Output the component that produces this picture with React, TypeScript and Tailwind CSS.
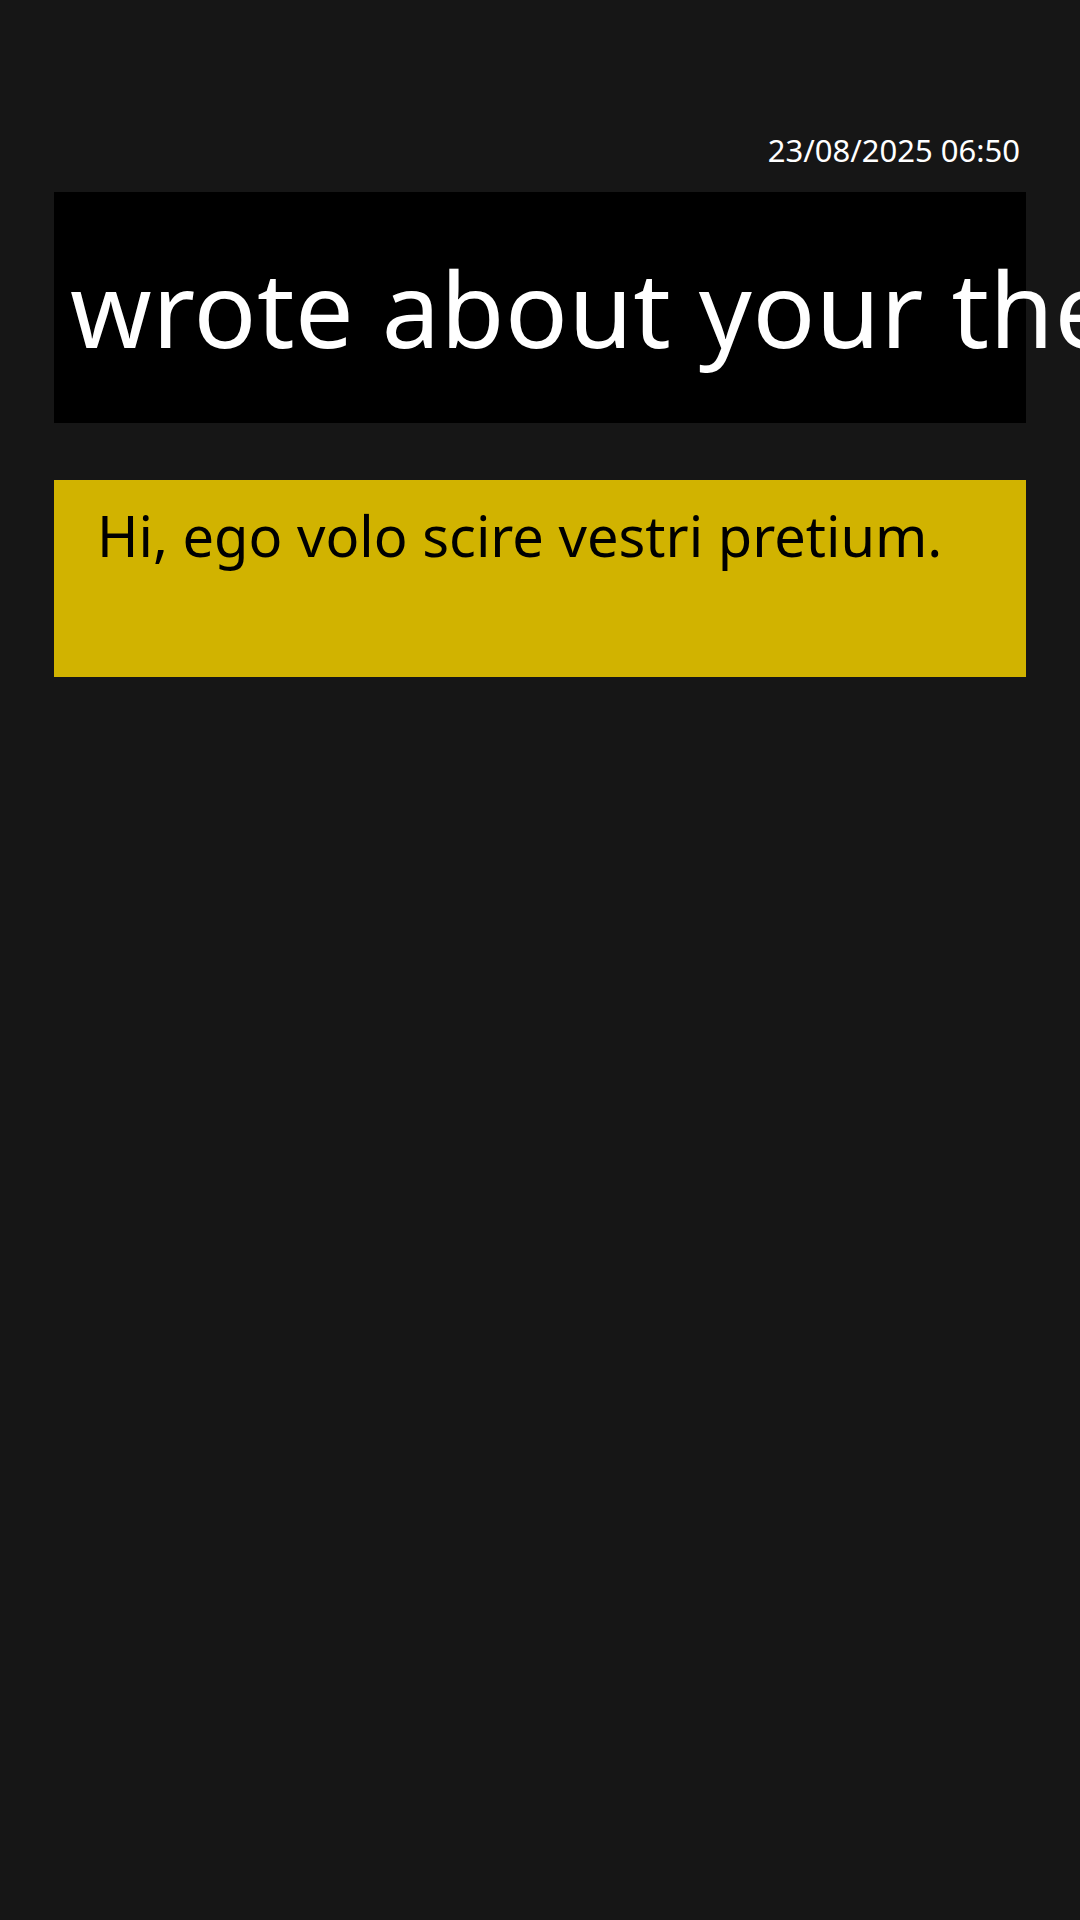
export default function App() {
  return (
    <div
      className="min-h-[1920px] w-full overflow-hidden bg-[#161616] px-[54px] pt-[130px]"
      style={{ fontFamily: '"Noto Sans", "Open Sans", sans-serif' }}
    >
      <div className="pr-[6px] text-right text-[31px] leading-[40px] text-white">23/08/2025 06:50</div>
      <div className="mt-[22px] flex h-[231px] items-center bg-black pl-[16px]">
        <div className="whitespace-nowrap text-[104px] leading-none tracking-[0.5px] text-white">wrote about your theme</div>
      </div>
      <div className="mt-[57px] h-[197px] bg-[#d1b300] pl-[43px] pt-[27px]">
        <div className="whitespace-nowrap text-[56px] leading-none text-black">Hi, ego volo scire vestri pretium.</div>
      </div>
    </div>
  );
}
